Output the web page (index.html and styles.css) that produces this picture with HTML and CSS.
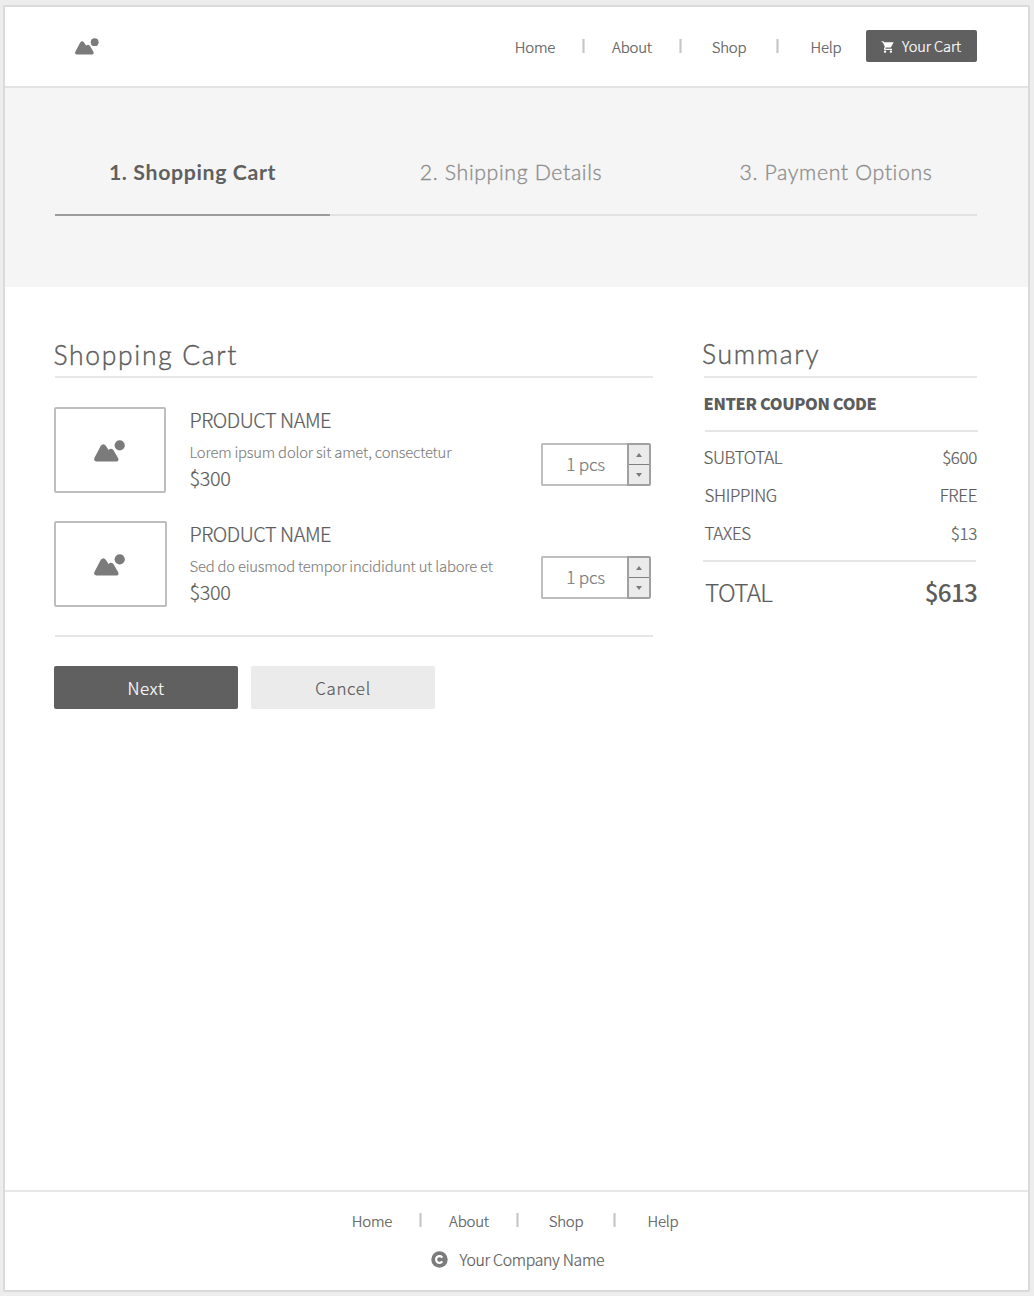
FILE: index.html
```html
<!DOCTYPE html>
<html lang="en">
<head>
<meta charset="utf-8">
<title>Shopping Cart</title>
<link rel="stylesheet" href="styles.css">
</head>
<body>
<svg class="defs" width="0" height="0">
  <symbol id="picture" viewBox="0 0 32 22">
    <path d="M6.8 5.8Q9.3 2.600 11.800 5.800L14.6 10Q17 7.4 19.4 10.1L24.2 18.2Q25.200 21.5 22.2 21.5H2.2Q-.7 21.300 .4 18Z"/>
    <circle cx="25.7" cy="5.3" r="5.1"/>
  </symbol>
</svg>
<div class="page">
  <header class="header">
    <a class="logo"><svg><use href="#picture"/></svg></a>
    <nav class="nav">
      <a>Home</a><i></i><a>About</a><i></i><a>Shop</a><i></i><a>Help</a>
    </nav>
    <a class="cart-button">
      <svg viewBox="0 0 24 24"><path d="M7 18c-1.100 0-2 .9-2 2s.9 2 2 2 2-.9 2-2-.9-2-2-2zM1 2v2h2l3.600 7.590-1.350 2.450C4.520 15.370 5.480 17 7 17h12v-2H7.420l-.1-.25L8.100 13h7.450c.75 0 1.410-.41 1.750-1.030L21.700 4H5.210l-.94-2H1zm16 16c-1.100 0-2 .9-2 2s.9 2 2 2 2-.9 2-2-.9-2-2-2z"/></svg>
      Your Cart
    </a>
  </header>

  <section class="band">
    <ol class="steps">
      <li class="active">1. Shopping Cart</li>
      <li>2. Shipping Details</li>
      <li>3. Payment Options</li>
    </ol>
  </section>

  <main class="main">
    <section class="cart">
      <h2>Shopping Cart</h2>
      <div class="items">
        <article class="item">
          <div class="thumb"><svg><use href="#picture"/></svg></div>
          <div class="info">
            <h3>PRODUCT NAME</h3>
            <p>Lorem ipsum dolor sit amet, consectetur</p>
            <strong>$300</strong>
          </div>
          <div class="stepper">
            <span>1 pcs</span>
            <div class="arrows"><b><i class="up"></i></b><b><i class="down"></i></b></div>
          </div>
        </article>
        <article class="item second">
          <div class="thumb"><svg><use href="#picture"/></svg></div>
          <div class="info">
            <h3>PRODUCT NAME</h3>
            <p>Sed do eiusmod tempor incididunt ut labore et</p>
            <strong>$300</strong>
          </div>
          <div class="stepper">
            <span>1 pcs</span>
            <div class="arrows"><b><i class="up"></i></b><b><i class="down"></i></b></div>
          </div>
        </article>
      </div>
      <div class="actions">
        <a class="button primary">Next</a>
        <a class="button">Cancel</a>
      </div>
    </section>

    <aside class="summary">
      <h2>Summary</h2>
      <div class="coupon">ENTER COUPON CODE</div>
      <dl class="lines">
        <div><dt>SUBTOTAL</dt><dd>$600</dd></div>
        <div class="inset"><dt>SHIPPING</dt><dd>FREE</dd></div>
        <div class="inset"><dt>TAXES</dt><dd>$13</dd></div>
      </dl>
      <div class="total"><span>TOTAL</span><b>$613</b></div>
    </aside>
  </main>

  <footer class="footer">
    <nav class="nav">
      <a>Home</a><i></i><a>About</a><i></i><a>Shop</a><i></i><a>Help</a>
    </nav>
    <p class="company">
      <svg viewBox="0 0 17 17"><circle cx="8.500" cy="8.500" r="8.200"/><path class="ring" d="M11.300 6.600A3.400 3.400 0 1 0 11.300 10.400"/></svg>
      Your Company Name
    </p>
  </footer>
</div>
</body>
</html>
```
FILE: styles.css
```css
* { box-sizing: border-box; margin: 0; padding: 0; }

body {
  background: #ededed;
  color: #5c5c5c;
  font-family: "Noto Sans CJK SC", "Noto Sans", sans-serif;
  font-weight: 300;
  white-space: nowrap;
  -webkit-text-stroke: .22px;
}

.defs { display: block; }
svg { display: block; fill: #7b7b7b; }

.page {
  display: flex;
  flex-direction: column;
  width: 1027px;
  height: 1287px;
  margin: 5px 0 0 3px;
  background: #fff;
  border: 2px solid #dadada;
  border-radius: 2px;
}

/* Header */
.header {
  display: flex;
  align-items: center;
  height: 81px;
  padding: 0 51px 0 69.500px;
  border-bottom: 2px solid #e4e4e4;
}
.logo { margin-right: auto; }
.logo svg { width: 24.500px; height: 17px; margin-top: -1px; }

.nav {
  display: flex;
  align-items: center;
  height: 20px;
  font-size: 15px;
  letter-spacing: -.2px;
  line-height: 20px;
}
.nav a { width: 94px; text-align: center; }
.nav i {
  width: 3px;
  height: 14px;
  margin-top: -2px;
  background: #c6c6c6;
  border: solid #dedede;
  border-width: 0 1px;
}

.cart-button {
  display: flex;
  align-items: center;
  gap: 7px;
  width: 111px;
  height: 32px;
  margin: -1px 0 0 -7px;
  padding: 0 0 1px 15px;
  border-radius: 2px;
  background: #606060;
  color: #fff;
  font-size: 14.600px;
  letter-spacing: -.1px;
}
.cart-button svg { width: 14px; height: 14px; margin-top: 2px; fill: #fff; }

/* Progress steps */
.band { height: 199px; padding: 42px 51px 0 50px; background: #f5f5f5; }
.steps {
  display: grid;
  grid-template-columns: 275px 362px 1fr;
  list-style: none;
  font: 300 21.300px/84px Lato, sans-serif;
  letter-spacing: .63px;
  text-align: center;
  color: #8e8e8e;
  -webkit-text-stroke: .35px;
}
.steps li { border-bottom: 2px solid #e2e2e2; }
.steps li:last-child { padding-left: 3px; }
.steps .active {
  border-color: #9c9c9c;
  color: #606060;
  font-weight: 700;
  -webkit-text-stroke: 0;
}

/* Content columns */
.main {
  display: flex;
  flex: 1;
  justify-content: space-between;
  padding: 45px 51px 0 50px;
}
.cart { width: 598px; }
.summary { width: 273px; }

h2 {
  height: 46px;
  border-bottom: 2px solid #e8e8e8;
  font: 300 26.500px/46px Lato, sans-serif;
  letter-spacing: 1.670px;
  text-indent: -1.500px;
  -webkit-text-stroke: .4px;
}
.summary h2 { line-height: 44px; text-indent: -2px; }

.items {
  display: flex;
  flex-direction: column;
  gap: 28px;
  padding: 29px 0 28px;
  border-bottom: 2px solid #e6e6e6;
}
.item { display: flex; height: 86px; margin: 0 2px 0 -1px; }

.thumb {
  width: 112px;
  padding: 31px 0 0 38px;
  border: 2px solid #bebebe;
  border-radius: 2px;
}
.thumb svg { width: 32px; height: 22px; }
.info { margin: 0 auto 0 23.500px; }
.info h3 { font-size: 19.900px; font-weight: 300; letter-spacing: -.45px; line-height: 26px; }
.info p {
  margin-top: 7px;
  font-size: 14.800px;
  letter-spacing: -.19px;
  line-height: 24px;
  color: #7c7c7c;
  -webkit-text-stroke: .12px;
}
.info strong {
  display: block;
  font-size: 19.800px;
  font-weight: 300;
  letter-spacing: -.3px;
  line-height: 28px;
}

.stepper {
  display: flex;
  width: 110px;
  height: 43px;
  margin-top: 36px;
  color: #7a7a7a;
  font-size: 17.200px;
  letter-spacing: -.25px;
  line-height: 38px;
}
.stepper span {
  flex: 1;
  padding-left: 1px;
  text-align: center;
  border: 2px solid #bebebe;
  border-right: 0;
  border-radius: 2px 0 0 2px;
}
.arrows {
  display: flex;
  flex-direction: column;
  width: 24px;
  border: 2px solid #a0a0a0;
  border-radius: 0 2px 2px 0;
  background: #ebebeb;
}
.arrows b { display: flex; flex: 1; align-items: center; justify-content: center; }
.arrows b + b { border-top: 1px solid #808080; }
.up, .down { border: 3px solid transparent; }
.up { border-top: 0; border-bottom: 4px solid #7b7b7b; }
.down { border-bottom: 0; border-top: 4px solid #7b7b7b; }

.second .thumb { width: 113px; }
.second .info { margin-left: 22.500px; }
.second .stepper { margin-top: 35px; }

.actions { display: flex; gap: 13px; margin: 29px 0 0 -1px; }
.button {
  width: 184px;
  height: 43px;
  border-radius: 2px;
  background: #ebebeb;
  font-size: 16.900px;
  line-height: 43px;
  letter-spacing: .7px;
  text-align: center;
}
.primary { background: #606060; color: #fff; }

/* Summary */
.coupon {
  height: 54px;
  margin: 0 -1px 0 1px;
  border-bottom: 2px solid #e6e6e6;
  text-indent: -1.500px;
  font-size: 16.300px;
  font-weight: 900;
  letter-spacing: -.37px;
  line-height: 51px;
  -webkit-text-stroke: 0;
}
.lines {
  height: 130px;
  margin: 0 1px 0 -1px;
  padding-top: 6px;
  border-bottom: 2px solid #e6e6e6;
  font-size: 16.900px;
  letter-spacing: -.32px;
  line-height: 38px;
}
.lines div { display: flex; justify-content: space-between; margin-right: -1px; }
.lines dt { padding-left: .5px; }
.lines .inset dt { padding-left: 1.500px; }
.total {
  display: flex;
  justify-content: space-between;
  padding-left: 1px;
  font-size: 24.300px;
  letter-spacing: -.7px;
  line-height: 60px;
}
.total b { font-weight: 500; letter-spacing: -.8px; -webkit-text-stroke: 0; }

/* Footer */
.footer {
  display: flex;
  flex-direction: column;
  align-items: center;
  height: 100px;
  padding: 19px 0 0 2px;
  border-top: 2px solid #e8e8e8;
}
.company {
  display: flex;
  align-items: center;
  gap: 11.500px;
  margin-top: 18px;
  font-size: 15.800px;
  letter-spacing: -.3px;
  line-height: 21px;
}
.company svg { width: 17px; height: 17px; }
.company .ring { fill: none; stroke: #fff; stroke-width: 2.200px; }
```
